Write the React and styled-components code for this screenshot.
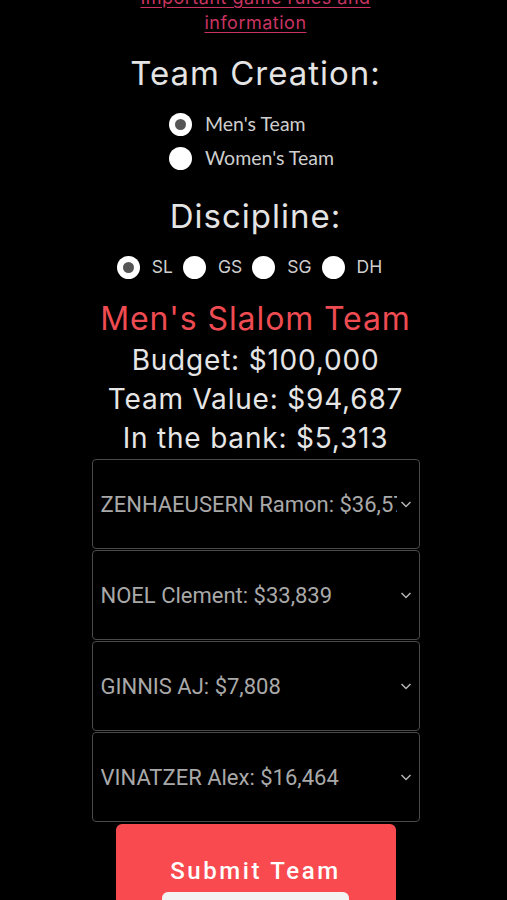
import styled, { createGlobalStyle } from "styled-components";

const Global = createGlobalStyle`
	html, body {
		margin: 0;
		padding: 0;
		background: #000;
		overflow: hidden;
	}
`;

const Page = styled.div`
	width: 507px;
	height: 900px;
	overflow: hidden;
	background: #000;
	color: #e6e6e6;
	font-family: "Open Sans", sans-serif;
`;

const Content = styled.div`
	display: flex;
	flex-direction: column;
	align-items: center;
	margin-top: -15px;
	padding-left: 4px;
`;

const RulesLink = styled.a`
	display: block;
	width: 250px;
	text-align: center;
	color: #c93461;
	font-family: Inter, sans-serif;
	font-size: 18px;
	letter-spacing: 0.5px;
	line-height: 25px;
	text-decoration: underline;
	text-underline-offset: 3px;
`;

const Heading = styled.h2`
	margin: ${(p) => p.margin || "18px 0 0"};
	font-family: Inter, sans-serif;
	font-weight: 400;
	font-size: 33px;
	letter-spacing: 1px;
	line-height: 40px;
	color: #e4e4e4;
`;

const RadioStack = styled.div`
	display: flex;
	flex-direction: column;
	gap: 10px;
	margin: 19px 8px 0 0;
	align-self: center;
`;

const RadioRow = styled.div`
	display: flex;
	align-items: center;
	gap: ${(p) => p.gap || "13px"};
	font-family: ${(p) => p.font || "Lato, sans-serif"};
	font-size: ${(p) => p.size || "19.5px"};
	color: #cfcfcf;
	line-height: 24px;
`;

const Dot = styled.span`
	width: 23px;
	height: 23px;
	border-radius: 50%;
	background: #fff;
	display: flex;
	align-items: center;
	justify-content: center;
	flex-shrink: 0;
	&::after {
		content: "";
		width: 11px;
		height: 11px;
		border-radius: 50%;
		background: ${(p) => (p.checked ? "#555" : "transparent")};
	}
`;

const DisciplineRow = styled.div`
	display: flex;
	align-items: center;
	gap: 10px;
	margin: 19px 12px 0 0;
`;

const TeamTitle = styled.div`
	margin-top: 18px;
	color: #ee4b52;
	font-family: Inter, sans-serif;
	font-size: 32px;
	letter-spacing: 0.9px;
	line-height: 44px;
`;

const Stat = styled.div`
	font-family: Inter, sans-serif;
	font-size: 28px;
	letter-spacing: 0.8px;
	line-height: 39px;
	color: #e6e6e6;
`;

const SelectList = styled.div`
	display: flex;
	flex-direction: column;
	margin-top: 1px;
	width: 328px;
`;

const SelectBox = styled.div`
	height: 88px;
	border: 1px solid #4a4a4a;
	border-radius: 4px;
	margin-bottom: 1px;
	display: flex;
	align-items: center;
	padding: 0 6px 0 8px;
	font-family: Roboto, sans-serif;
	font-size: 22px;
	color: #a9a9a9;
	overflow: hidden;
`;

const SelectText = styled.span`
	flex: 1;
	white-space: nowrap;
	overflow: hidden;
	text-overflow: clip;
`;

const Chevron = styled.svg`
	width: 14px;
	height: 14px;
	flex-shrink: 0;
	margin-left: 2px;
`;

const SubmitButton = styled.button`
	margin-top: 1px;
	width: 280px;
	height: 100px;
	border: none;
	border-radius: 6px;
	background: #f94b4f;
	color: #fff;
	font-family: Roboto, sans-serif;
	font-weight: 500;
	font-size: 24px;
	line-height: 28px;
	letter-spacing: 2.6px;
	display: flex;
	flex-direction: column;
	align-items: center;
	padding-top: 33px;
	box-sizing: border-box;
`;

const ButtonPill = styled.span`
	margin-top: 7px;
	width: 187px;
	height: 20px;
	border-radius: 6px;
	background: #f3f3f3;
`;

const players = [
	"ZENHAEUSERN Ramon: $36,576",
	"NOEL Clement: $33,839",
	"GINNIS AJ: $7,808",
	"VINATZER Alex: $16,464",
];

const disciplines = ["SL", "GS", "SG", "DH"];

const ChevronIcon = () => (
	<Chevron viewBox="0 0 14 14">
		<path d="M2.5 5 L7 9.5 L11.5 5" fill="none" stroke="#b5b5b5" strokeWidth="1.5" />
	</Chevron>
);

export default function App() {
	return (
		<Page>
			<Global />
			<Content>
				<RulesLink href="#">Important game rules and information</RulesLink>
				<Heading>Team Creation:</Heading>
				<RadioStack>
					<RadioRow>
						<Dot checked />
						Men's Team
					</RadioRow>
					<RadioRow>
						<Dot />
						Women's Team
					</RadioRow>
				</RadioStack>
				<Heading margin="26px 0 0">Discipline:</Heading>
				<DisciplineRow>
					{disciplines.map((d, i) => (
						<RadioRow key={d} gap="12px" size="17.5px" font="Inter, sans-serif">
							<Dot checked={i === 0} />
							{d}
						</RadioRow>
					))}
				</DisciplineRow>
				<TeamTitle>Men's Slalom Team</TeamTitle>
				<Stat>Budget: $100,000</Stat>
				<Stat>Team Value: $94,687</Stat>
				<Stat>In the bank: $5,313</Stat>
				<SelectList>
					{players.map((p) => (
						<SelectBox key={p}>
							<SelectText>{p}</SelectText>
							<ChevronIcon />
						</SelectBox>
					))}
				</SelectList>
				<SubmitButton>
					Submit Team
					<ButtonPill />
				</SubmitButton>
			</Content>
		</Page>
	);
}
